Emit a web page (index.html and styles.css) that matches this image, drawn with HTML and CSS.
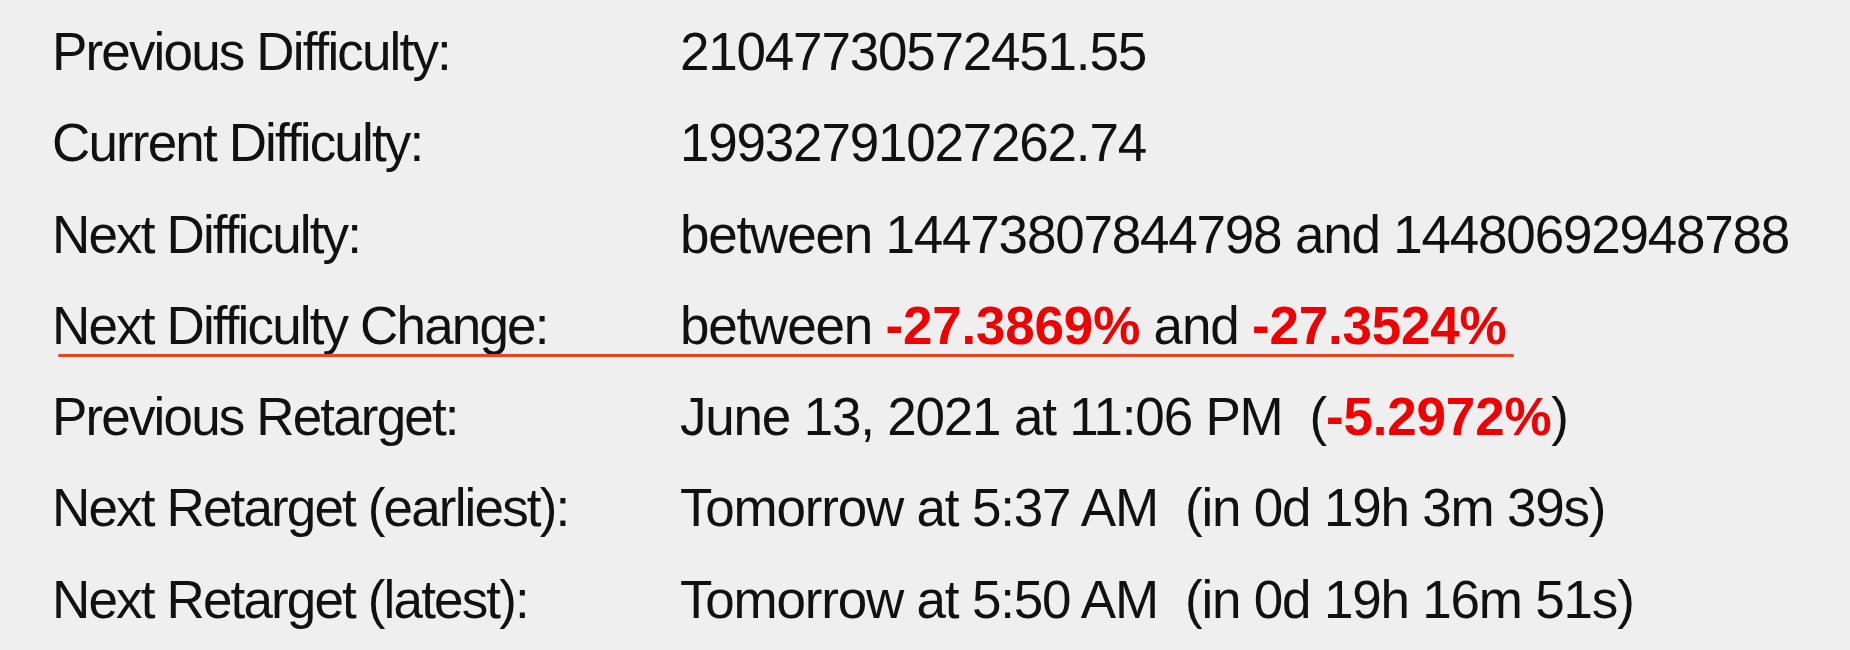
FILE: index.html
```html
<!DOCTYPE html>
<html lang="en">
<head>
<meta charset="utf-8">
<title>Difficulty</title>
<link rel="stylesheet" href="styles.css">
</head>
<body>
<div class="stats">
  <div class="row"><span class="label">Previous Difficulty:</span><span class="value">21047730572451.55</span></div>
  <div class="row"><span class="label">Current Difficulty:</span><span class="value">19932791027262.74</span></div>
  <div class="row"><span class="label">Next Difficulty:</span><span class="value">between 14473807844798 and 14480692948788</span></div>
  <div class="row marked"><span class="label">Next Difficulty Change:</span><span class="value">between <b class="neg">-27.3869%</b> and <b class="neg">-27.3524%</b></span></div>
  <div class="row"><span class="label">Previous Retarget:</span><span class="value">June 13, 2021 at 11:06 PM  (<b class="neg">-5.2972%</b>)</span></div>
  <div class="row"><span class="label">Next Retarget (earliest):</span><span class="value">Tomorrow at 5:37 AM  (in 0d 19h 3m 39s)</span></div>
  <div class="row"><span class="label">Next Retarget (latest):</span><span class="value">Tomorrow at 5:50 AM  (in 0d 19h 16m 51s)</span></div>
</div>
</body>
</html>
```
FILE: styles.css
```css
html, body {
  margin: 0;
  padding: 0;
  background: #efefef;
}
body {
  width: 1850px;
  height: 650px;
  overflow: hidden;
  font-family: "Liberation Sans", Arial, Helvetica, sans-serif;
  color: #111111;
}
.stats {
  padding: 6px 0 0 52px;
  display: flex;
  flex-direction: column;
}
.row {
  display: grid;
  grid-template-columns: 628px auto;
  font-size: 53px;
  line-height: 91.3px;
  white-space: pre;
}
.label {
  letter-spacing: -1.85px;
}
.value {
  letter-spacing: -1.2px;
}
.neg {
  color: #f00000;
  font-weight: bold;
  letter-spacing: -0.2px;
}
.marked {
  position: relative;
}
.marked::after {
  content: "";
  position: absolute;
  left: 6px;
  top: 74px;
  width: 1456px;
  height: 3px;
  border-radius: 2px;
  background: #f2401f;
}
```
